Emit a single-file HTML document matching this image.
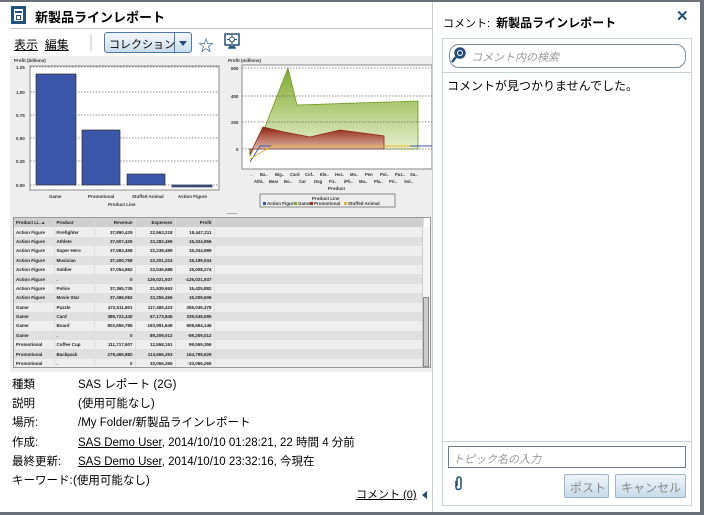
<!DOCTYPE html>
<html><head><meta charset="utf-8"><style>
*{margin:0;padding:0;box-sizing:border-box}
body{width:704px;height:515px;background:#fff;font-family:"Liberation Sans","Noto Sans CJK JP",sans-serif;position:relative;overflow:hidden;color:#000}
.a{position:absolute}
.t{font-size:12px;white-space:nowrap}
u{text-decoration:underline}
table{border-collapse:collapse;font-size:4.5px;font-weight:bold;color:#222}
td{height:9.4px;padding:0 2px;white-space:nowrap;border-right:1px solid #ddd}
.r{text-align:right}
</style></head><body>
<div class="a" style="left:0;top:0;width:704px;height:2px;background:#6b6f78"></div>
<div class="a" style="left:0;top:512px;width:704px;height:3px;background:#6b6f78"></div>
<!-- title -->
<div class="a" style="left:11px;top:6px;width:15px;height:18px;background:#24507e"></div>
<div class="a" style="left:14px;top:9px;width:9px;height:12px;background:#fff"></div>
<div class="a" style="left:15px;top:11px;width:7px;height:2px;background:#24507e"></div>
<div class="a" style="left:16px;top:15px;width:5px;height:5px;border:1.5px solid #24507e"></div>
<div class="a t" style="left:35px;top:7px;font-size:13px;font-weight:bold">新製品ラインレポート</div>
<div class="a" style="left:10px;top:28px;width:422px;height:1px;background:#b9c4cf"></div>
<!-- toolbar -->
<div class="a t" style="left:14px;top:36px;font-size:12px"><u>表示</u>&nbsp;&nbsp;<u>編集</u></div>
<div class="a" style="left:90px;top:34px;width:2px;height:17px;background:#dde3e8"></div>
<div class="a" style="left:104px;top:32px;width:88px;height:21px;border:1px solid #4d7aa5;border-radius:3px;background:linear-gradient(#f4f8fb,#c9dcec)"></div>
<div class="a t" style="left:109px;top:36px;font-size:11px">コレクション</div>
<div class="a" style="left:174px;top:33px;width:1px;height:19px;background:#4d7aa5"></div>
<div class="a" style="left:179px;top:41px;border-left:4px solid transparent;border-right:4px solid transparent;border-top:5px solid #24507e"></div>
<div class="a t" style="left:198px;top:32px;font-size:16px;color:#24507e">☆</div>
<svg class="a" style="left:224px;top:33px" width="16" height="17"><rect x="1" y="1" width="14" height="11" fill="#fff" stroke="#24507e" stroke-width="1.5"/><circle cx="8" cy="6.5" r="2.5" fill="none" stroke="#24507e"/><path d="M8 2v2M8 9v2M3 6.5h2M11 6.5h2" stroke="#24507e"/><path d="M6 12v2h4v-2M4 15h8" stroke="#24507e" stroke-width="1.5" fill="none"/></svg>
<!-- report area -->
<div class="a" style="left:10px;top:56px;width:422px;height:316px;background:#eeeeee"></div>
<svg class="a" style="left:10px;top:56px" width="422" height="160" font-family="Liberation Sans" font-size="4.5" font-weight="bold" fill="#333">
<text x="4" y="6">Profit (billions)</text>
<rect x="20" y="10" width="189" height="124" fill="#fff" stroke="#888"/>
<g stroke="#666" stroke-dasharray="1.5,1.5" stroke-width="0.7"><line x1="20" y1="11" x2="209" y2="11"/><line x1="20" y1="36" x2="209" y2="36"/><line x1="20" y1="59" x2="209" y2="59"/><line x1="20" y1="82" x2="209" y2="82"/><line x1="20" y1="105" x2="209" y2="105"/><line x1="20" y1="129" x2="209" y2="129"/></g>
<text x="6" y="13">1.25</text><text x="6" y="38">1.00</text><text x="6" y="61">0.75</text><text x="6" y="84">0.50</text><text x="6" y="107">0.25</text><text x="6" y="131">0.00</text>
<g fill="#3a56a8" stroke="#333" stroke-width="0.7"><rect x="26" y="18" width="40" height="111"/><rect x="72" y="74" width="38" height="55"/><rect x="117" y="118" width="38" height="11"/><rect x="162" y="129" width="40" height="2"/></g>
<text x="39" y="142">Game</text><text x="78" y="142">Promotional</text><text x="122" y="142">Stuffed Animal</text><text x="168" y="142">Action Figure</text>
<text x="98" y="150">Product Line</text>
<text x="218" y="6">Profit (millions)</text>
<defs><linearGradient id="g" x1="0" y1="0" x2="0" y2="1"><stop offset="0" stop-color="#7ea92a"/><stop offset="1" stop-color="#eef4dc"/></linearGradient><linearGradient id="rd" x1="0" y1="0" x2="0" y2="1"><stop offset="0" stop-color="#8e2410"/><stop offset="1" stop-color="#f0d8c8"/></linearGradient></defs>
<rect x="232" y="9" width="190" height="104" fill="#fff" stroke="#888"/>
<path d="M240 100 L255 71 L278 12 L287 49 L408 45 L408 93 L240 93Z" fill="url(#g)" stroke="#6f9a1c" stroke-width="0.8"/>
<path d="M240 98 L253 71 L274 76 L300 81 L330 74 L360 78 L374 80 L374 93 L240 93Z" fill="url(#rd)" stroke="#8e2410" stroke-width="0.8"/>
<g stroke="#666" stroke-dasharray="1.5,1.5" stroke-width="0.7"><line x1="232" y1="12" x2="422" y2="12"/><line x1="232" y1="40" x2="422" y2="40"/><line x1="232" y1="66" x2="422" y2="66"/><line x1="232" y1="93" x2="422" y2="93"/></g>
<path d="M240 106 L250 90 L422 90" fill="none" stroke="#3a56a8" stroke-width="0.9"/>
<path d="M240 103 L262 90 L400 90" fill="none" stroke="#e8b020" stroke-width="0.9"/>
<text x="221" y="14">600</text><text x="221" y="42">400</text><text x="221" y="68">200</text><text x="226" y="95">0</text>
<g font-size="4.2"><text x="241" y="120">.</text><text x="250" y="120">Ba..</text><text x="265" y="120">Big..</text><text x="280" y="120">Card</text><text x="295" y="120">Cof..</text><text x="310" y="120">Ele..</text><text x="325" y="120">Hor..</text><text x="340" y="120">Mo..</text><text x="355" y="120">Pen</text><text x="370" y="120">Pol..</text><text x="385" y="120">Puz..</text><text x="400" y="120">Su..</text>
<text x="244" y="127">Athl..</text><text x="259" y="127">Bear</text><text x="274" y="127">Bo..</text><text x="289" y="127">Car</text><text x="304" y="127">Dog</text><text x="319" y="127">Fir..</text><text x="334" y="127">iPh..</text><text x="349" y="127">Mu..</text><text x="364" y="127">Pla..</text><text x="379" y="127">Pri..</text><text x="394" y="127">Sol..</text></g>
<text x="318" y="134">Product</text>
<rect x="250" y="138" width="135" height="13" fill="none" stroke="#888"/>
<text x="302" y="144">Product Line</text>
<rect x="253" y="146" width="3" height="3" fill="#3a56a8"/><text x="257" y="149">Action Figure</text>
<rect x="284" y="146" width="3" height="3" fill="#7ea92a"/><text x="288" y="149">Game</text>
<rect x="300" y="146" width="3" height="3" fill="#a02a10"/><text x="304" y="149">Promotional</text>
<rect x="334" y="146" width="3" height="3" fill="#e8b020"/><text x="338" y="149">Stuffed Animal</text>
<rect x="217" y="157" width="10" height="1" fill="#aaa"/>
</svg>
<div class="a" style="left:13px;top:217px;width:418px;height:151px;border:1px solid #999;background:#fff;overflow:hidden">
<table style="width:410px">
<tr style="background:#cfcfcf;height:8px"><td style="width:40px">Product Li.. ▴</td><td style="width:40px">Product</td><td class="r" style="width:41px">Revenue</td><td class="r" style="width:40px">Expenses</td><td class="r" style="width:39px">Profit</td><td></td></tr>
<tr style="background:#eee"><td>Action Figure</td><td>Firefighter</td><td class="r">37,890,429</td><td class="r">22,563,218</td><td class="r">15,447,211</td><td></td></tr>
<tr style="background:#e0e0e0"><td>Action Figure</td><td>Athlete</td><td class="r">37,607,425</td><td class="r">22,282,469</td><td class="r">15,324,956</td><td></td></tr>
<tr style="background:#eee"><td>Action Figure</td><td>Super Hero</td><td class="r">37,583,458</td><td class="r">22,238,469</td><td class="r">15,344,989</td><td></td></tr>
<tr style="background:#e0e0e0"><td>Action Figure</td><td>Musician</td><td class="r">37,400,758</td><td class="r">22,201,224</td><td class="r">15,199,534</td><td></td></tr>
<tr style="background:#eee"><td>Action Figure</td><td>Soldier</td><td class="r">37,054,862</td><td class="r">22,046,588</td><td class="r">15,008,274</td><td></td></tr>
<tr style="background:#e0e0e0"><td>Action Figure</td><td>.</td><td class="r">0</td><td class="r">126,021,937</td><td class="r">-126,021,937</td><td></td></tr>
<tr style="background:#eee"><td>Action Figure</td><td>Police</td><td class="r">37,365,735</td><td class="r">21,939,653</td><td class="r">15,425,882</td><td></td></tr>
<tr style="background:#e0e0e0"><td>Action Figure</td><td>Movie Star</td><td class="r">37,466,062</td><td class="r">22,256,456</td><td class="r">15,209,606</td><td></td></tr>
<tr style="background:#eee"><td>Game</td><td>Puzzle</td><td class="r">472,511,801</td><td class="r">117,465,423</td><td class="r">355,046,378</td><td></td></tr>
<tr style="background:#e0e0e0"><td>Game</td><td>Card</td><td class="r">386,722,440</td><td class="r">67,173,845</td><td class="r">339,548,595</td><td></td></tr>
<tr style="background:#eee"><td>Game</td><td>Board</td><td class="r">802,655,785</td><td class="r">193,991,649</td><td class="r">608,664,146</td><td></td></tr>
<tr style="background:#e0e0e0"><td>Game</td><td>.</td><td class="r">0</td><td class="r">89,209,012</td><td class="r">-89,209,012</td><td></td></tr>
<tr style="background:#eee"><td>Promotional</td><td>Coffee Cup</td><td class="r">111,717,507</td><td class="r">12,558,151</td><td class="r">99,559,356</td><td></td></tr>
<tr style="background:#e0e0e0"><td>Promotional</td><td>Backpack</td><td class="r">279,465,882</td><td class="r">113,666,253</td><td class="r">164,799,629</td><td></td></tr>
<tr style="background:#eee"><td>Promotional</td><td>.</td><td class="r">0</td><td class="r">33,066,265</td><td class="r">-33,066,265</td><td></td></tr>
</table>
<div class="a" style="right:0;top:8px;width:8px;height:142px;background:#f4f4f4;border-left:1px solid #ccc"></div>
<div class="a" style="right:1px;top:79px;width:6px;height:70px;background:#ccc;border:1px solid #888"></div>
</div>
<!-- metadata -->
<div class="a t" style="left:12px;top:376px;line-height:19.2px;font-size:11.5px">種類<br>説明<br>場所:<br>作成:<br>最終更新:<br>キーワード:</div>
<div class="a t" style="left:78px;top:376px;line-height:19.2px;font-size:11.5px">SAS レポート (2G)<br>(使用可能なし)<br>/My Folder/新製品ラインレポート<br><u>SAS Demo User</u>, 2014/10/10 01:28:21, 22 時間 4 分前<br><u>SAS Demo User</u>, 2014/10/10 23:32:16, 今現在</div>
<div class="a t" style="left:73px;top:472px;line-height:19.2px;font-size:11.5px">(使用可能なし)</div>
<div class="a t" style="left:356px;top:486px;font-size:11px"><u>コメント (0)</u></div>
<div class="a" style="left:422px;top:491px;border-top:4px solid transparent;border-bottom:4px solid transparent;border-right:5px solid #24507e"></div>
<!-- right panel -->
<div class="a" style="left:432px;top:2px;width:1px;height:510px;background:#c8cdd2"></div>
<div class="a" style="left:700px;top:2px;width:4px;height:513px;background:#6b6f78"></div>
<div class="a t" style="left:443px;top:14px;font-size:11px">コメント: &nbsp;<b style="font-size:12px">新製品ラインレポート</b></div>
<div class="a t" style="left:676px;top:7px;font-size:15px;font-weight:bold;color:#24507e">✕</div>
<div class="a" style="left:442px;top:38px;width:250px;height:468px;border:1px solid #c8d2da"></div>
<div class="a" style="left:449px;top:44px;width:237px;height:24px;border:1px solid #7a8ca0;border-radius:10px"></div>
<svg class="a" style="left:450px;top:45px" width="18" height="22"><circle cx="10" cy="8" r="5" fill="#24507e" stroke="#24507e" stroke-width="1.5"/><circle cx="10" cy="8" r="3" fill="#fff"/><circle cx="10" cy="8" r="2" fill="#24507e"/><path d="M6 12 L2 17" stroke="#24507e" stroke-width="2.5"/></svg>
<div class="a t" style="left:471px;top:49px;font-size:11px;color:#999;font-style:italic">コメント内の検索</div>
<div class="a" style="left:443px;top:72px;width:248px;height:1px;background:#c8d2da"></div>
<div class="a t" style="left:447px;top:77px;font-size:12px">コメントが見つかりませんでした。</div>
<div class="a" style="left:443px;top:441px;width:248px;height:1px;background:#c8d2da"></div>
<div class="a" style="left:448px;top:446px;width:238px;height:22px;border:1px solid #6b7b90"></div>
<div class="a t" style="left:453px;top:451px;font-size:11px;color:#999;font-style:italic">トピック名の入力</div>
<svg class="a" style="left:453px;top:476px" width="10" height="15"><path d="M3 5v6a2.5 2.5 0 0 0 5 0V3a2 2 0 0 0-4 0v7" fill="none" stroke="#24507e" stroke-width="1.6"/></svg>
<div class="a" style="left:564px;top:474px;width:45px;height:24px;border:1px solid #9ab5cc;border-radius:2px;background:linear-gradient(#eef4f9,#c8dbea)"></div>
<div class="a t" style="left:570px;top:479px;font-size:12px;color:#888">ポスト</div>
<div class="a" style="left:615px;top:474px;width:71px;height:24px;border:1px solid #9ab5cc;border-radius:2px;background:linear-gradient(#eef4f9,#c8dbea)"></div>
<div class="a t" style="left:621px;top:479px;font-size:12px;color:#888">キャンセル</div>
</body></html>
